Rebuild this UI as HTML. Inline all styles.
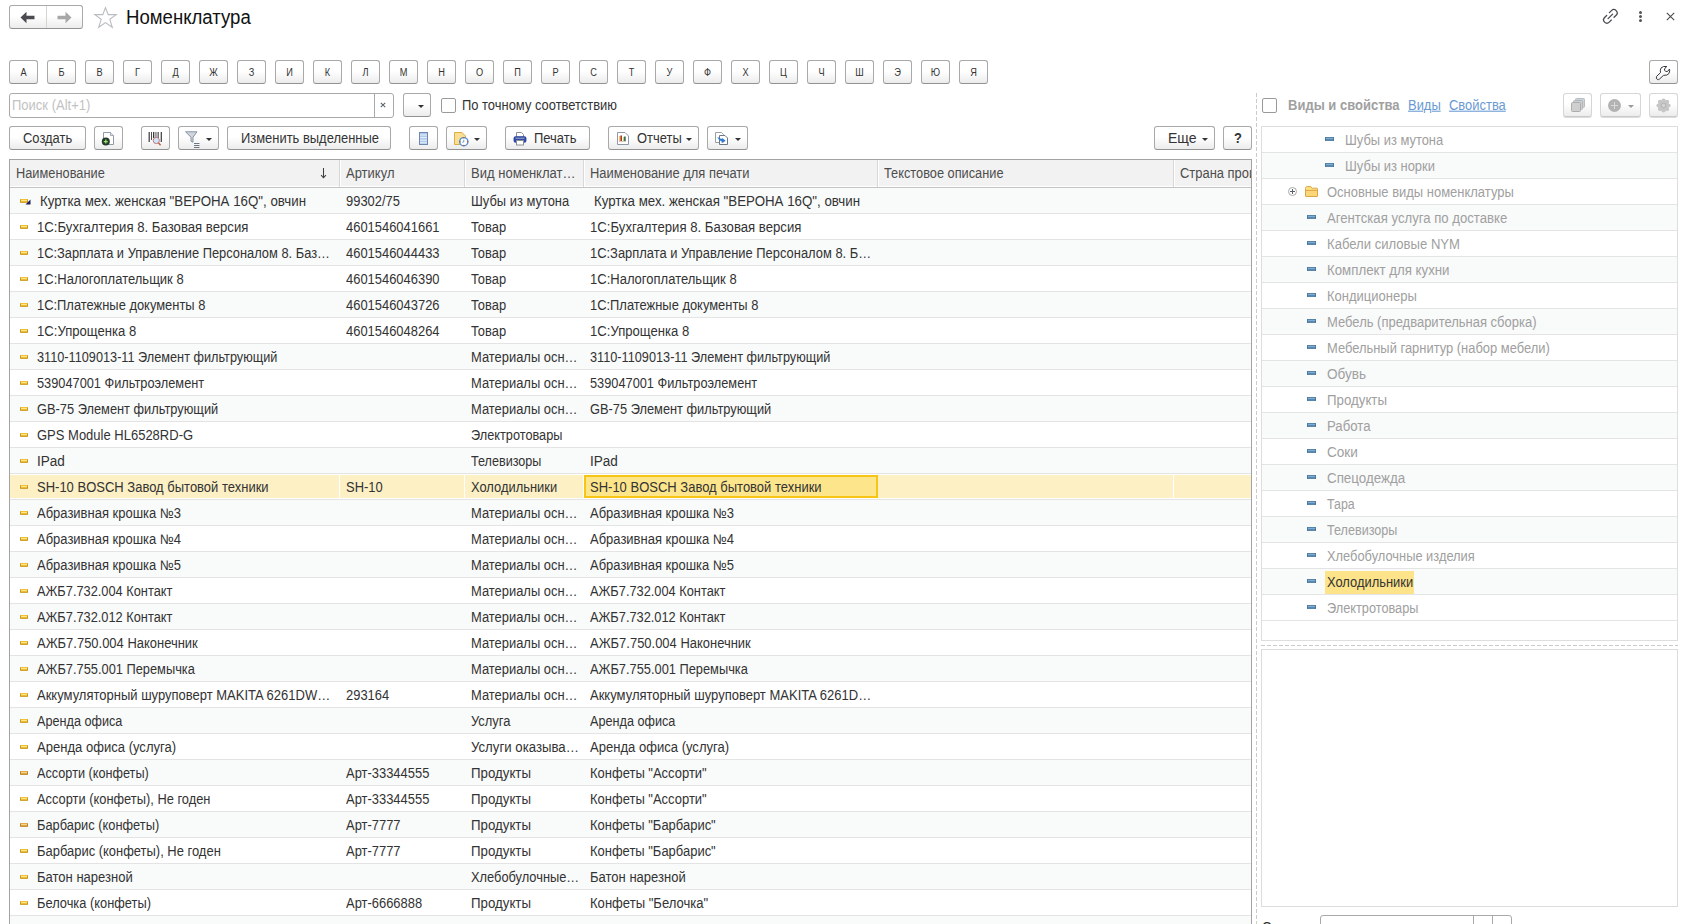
<!DOCTYPE html><html><head><meta charset="utf-8"><title>Номенклатура</title><style>
*{box-sizing:border-box}
html,body{margin:0;padding:0}
body{width:1689px;height:924px;overflow:hidden;background:#fff;position:relative;font-family:"Liberation Sans",sans-serif;font-size:13px;color:#333}
.abs{position:absolute}
.btn{position:absolute;border:1px solid #a9a9a9;border-bottom-color:#929292;border-radius:3px;background:linear-gradient(#ffffff 0%,#ffffff 45%,#ececec 100%);height:24px}
.btn.dis{border-color:#d6d6d6;border-bottom-color:#cacaca;box-shadow:0 1px 0 #dcdcdc}
.lt{position:absolute;top:62px;width:29px;height:23px;font-size:10px;color:#333;text-align:center;line-height:22px;transform:scaleX(0.92)}
.tx{position:absolute;white-space:nowrap;line-height:16px;transform:scale(0.995,1.07);transform-origin:0 3.5px}
.row{position:absolute;left:0;width:1241px;height:26px;border-bottom:1px solid #e4e4e4}
.row.g{background:#f9fafa}
.cell{position:absolute;top:5px;white-space:nowrap;color:#333;line-height:16px;transform:scale(0.995,1.07);transform-origin:0 3.5px}
.ic{position:absolute;left:10px;top:11px;width:8px;height:4px;background:linear-gradient(#f2c232 0 1px,#fde58a 1px 2px,#e9be36 2px 3px,#d3a52e 3px 4px);border-left:1px solid #c8951f;border-right:1px solid #c8951f;border-radius:1px}
.ic.br{background:linear-gradient(#e0a840 0 1px,#f6d596 1px 2px,#dea544 2px 3px,#c99236 3px 4px);border-color:#b98028}
.trow{position:absolute;left:1262px;width:1415px;height:26px;border-bottom:1px solid #e4e4e4}
.trow.g{background:#f9fafa}
.tic{position:absolute;width:9px;height:4px;background:linear-gradient(#5585ab 0 1px,#80acd2 1px 2px,#5a88ad 2px 4px);border-left:1px solid #4d7aa0;border-right:1px solid #4d7aa0}
.ttx{position:absolute;top:5px;white-space:nowrap;color:#a0a0a0;line-height:16px;transform:scale(0.995,1.07);transform-origin:0 3.5px}
.arr{position:absolute;width:0;height:0;border-left:3px solid transparent;border-right:3px solid transparent;border-top:3px solid #333}
</style></head><body>
<div class="btn" style="left:9px;top:5px;width:74px;height:24px"></div>
<div class="abs" style="left:46px;top:6px;width:1px;height:22px;background:#d4d4d4"></div>
<svg class="abs" style="left:20px;top:11px" width="16" height="13" viewBox="0 0 16 13"><path d="M0.5 6.5 L6.5 0.8 L6.5 4.8 L14.5 4.8 L14.5 8.2 L6.5 8.2 L6.5 12.2 Z" fill="#4a4a50"/></svg>
<svg class="abs" style="left:56px;top:11px" width="16" height="13" viewBox="0 0 16 13"><path d="M15.5 6.5 L9.5 0.8 L9.5 4.8 L1.5 4.8 L1.5 8.2 L9.5 8.2 L9.5 12.2 Z" fill="#a7a7a7"/></svg>
<svg class="abs" style="left:93px;top:5px" width="25" height="24" viewBox="0 0 25 24"><path d="M12.5 2.6 L15.2 9.6 L23.2 9.6 L16.8 14.3 L19.3 22.3 L12.5 17.6 L5.7 22.3 L8.2 14.3 L1.8 9.6 L9.8 9.6 Z" fill="none" stroke="#b9bcc0" stroke-width="1.1" stroke-linejoin="miter"/></svg>
<div class="tx" style="left:126px;top:6px;font-size:18.6px;line-height:22px;color:#111;transform:scaleY(1.07);transform-origin:0 4px">Номенклатура</div>
<svg class="abs" style="left:1602px;top:8px" width="17" height="17" viewBox="0 0 19 19"><g fill="none" stroke="#4a4a4f" stroke-width="1.45" stroke-linecap="round"><path d="M8.3 5.2 L10.6 2.9 A3.3 3.3 0 0 1 15.8 8.1 L13.5 10.4"/><path d="M10.4 13.5 L8.1 15.8 A3.3 3.3 0 0 1 2.9 10.6 L5.2 8.3"/><path d="M6.8 11.9 L11.9 6.8"/></g></svg>
<div class="abs" style="left:1639px;top:11px;width:3.4px;height:3.4px;border-radius:50%;background:#555"></div>
<div class="abs" style="left:1639px;top:15px;width:3.4px;height:3.4px;border-radius:50%;background:#555"></div>
<div class="abs" style="left:1639px;top:19px;width:3.4px;height:3.4px;border-radius:50%;background:#555"></div>
<svg class="abs" style="left:1666px;top:12px" width="9" height="9" viewBox="0 0 9 9"><path d="M0.8 0.8 L8.2 8.2 M8.2 0.8 L0.8 8.2" stroke="#4a4a4f" stroke-width="1.1"/></svg>
<div class="btn" style="left:9px;top:60px;width:29px"></div><div class="lt" style="left:9px">А</div>
<div class="btn" style="left:47px;top:60px;width:29px"></div><div class="lt" style="left:47px">Б</div>
<div class="btn" style="left:85px;top:60px;width:29px"></div><div class="lt" style="left:85px">В</div>
<div class="btn" style="left:123px;top:60px;width:29px"></div><div class="lt" style="left:123px">Г</div>
<div class="btn" style="left:161px;top:60px;width:29px"></div><div class="lt" style="left:161px">Д</div>
<div class="btn" style="left:199px;top:60px;width:29px"></div><div class="lt" style="left:199px">Ж</div>
<div class="btn" style="left:237px;top:60px;width:29px"></div><div class="lt" style="left:237px">З</div>
<div class="btn" style="left:275px;top:60px;width:29px"></div><div class="lt" style="left:275px">И</div>
<div class="btn" style="left:313px;top:60px;width:29px"></div><div class="lt" style="left:313px">К</div>
<div class="btn" style="left:351px;top:60px;width:29px"></div><div class="lt" style="left:351px">Л</div>
<div class="btn" style="left:389px;top:60px;width:29px"></div><div class="lt" style="left:389px">М</div>
<div class="btn" style="left:427px;top:60px;width:29px"></div><div class="lt" style="left:427px">Н</div>
<div class="btn" style="left:465px;top:60px;width:29px"></div><div class="lt" style="left:465px">О</div>
<div class="btn" style="left:503px;top:60px;width:29px"></div><div class="lt" style="left:503px">П</div>
<div class="btn" style="left:541px;top:60px;width:29px"></div><div class="lt" style="left:541px">Р</div>
<div class="btn" style="left:579px;top:60px;width:29px"></div><div class="lt" style="left:579px">С</div>
<div class="btn" style="left:617px;top:60px;width:29px"></div><div class="lt" style="left:617px">Т</div>
<div class="btn" style="left:655px;top:60px;width:29px"></div><div class="lt" style="left:655px">У</div>
<div class="btn" style="left:693px;top:60px;width:29px"></div><div class="lt" style="left:693px">Ф</div>
<div class="btn" style="left:731px;top:60px;width:29px"></div><div class="lt" style="left:731px">Х</div>
<div class="btn" style="left:769px;top:60px;width:29px"></div><div class="lt" style="left:769px">Ц</div>
<div class="btn" style="left:807px;top:60px;width:29px"></div><div class="lt" style="left:807px">Ч</div>
<div class="btn" style="left:845px;top:60px;width:29px"></div><div class="lt" style="left:845px">Ш</div>
<div class="btn" style="left:883px;top:60px;width:29px"></div><div class="lt" style="left:883px">Э</div>
<div class="btn" style="left:921px;top:60px;width:29px"></div><div class="lt" style="left:921px">Ю</div>
<div class="btn" style="left:959px;top:60px;width:29px"></div><div class="lt" style="left:959px">Я</div>
<div class="btn" style="left:1649px;top:60px;width:29px"></div>
<svg class="abs" style="left:1649px;top:60px" width="30" height="25" viewBox="0 0 30 25"><path d="M17.8 6.5 L14.6 6.5 Q11.5 7.2 11.3 10.2 L11.5 12.6 L7.6 16.4 Q6.6 18.2 8.4 19.5 Q9.6 20.0 10.4 19.1 L14.6 15.3 L17.8 15.1 Q20.6 14.2 20.7 10.8 L20.5 9.0 L18.6 11.4 Q16.2 12.2 15.4 10.0 Q15.4 8.0 17.8 6.5 Z" fill="none" stroke="#3a3540" stroke-width="1" stroke-linejoin="round"/></svg>
<div class="abs" style="left:9px;top:93px;width:385px;height:25px;border:1px solid #a9a9a9;border-radius:3px;background:#fff"></div>
<div class="abs" style="left:374px;top:94px;width:1px;height:23px;background:#a9a9a9"></div>
<div class="tx" style="left:12px;top:97px;color:#c2c2c2;transform:scaleY(1.07)">Поиск (Alt+1)</div>
<svg class="abs" style="left:380px;top:102px" width="6" height="6" viewBox="0 0 6 6"><path d="M0.8 0.8 L5.2 5.2 M5.2 0.8 L0.8 5.2" stroke="#59626a" stroke-width="1.05"/></svg>
<div class="btn" style="left:403px;top:93px;width:28px;height:24px"></div>
<div class="arr" style="left:418px;top:105px;border-top-color:#333"></div>
<div class="abs" style="left:441px;top:98px;width:15px;height:15px;border:1px solid #9a9a9a;border-radius:2px;background:#fff"></div>
<div class="tx" style="left:462px;top:97px">По точному соответствию</div>
<div class="abs" style="left:1256px;top:93px;width:1px;height:831px;background:repeating-linear-gradient(to bottom,#cbcbcb 0 4px,transparent 4px 6px)"></div>
<div class="abs" style="left:1262px;top:98px;width:15px;height:15px;border:1px solid #9a9a9a;border-radius:2px;background:#fff"></div>
<div class="tx" style="left:1288px;top:97px;font-weight:bold;color:#a0a0a0;transform:scale(1,1.07)">Виды и свойства</div>
<div class="tx" style="left:1408px;top:97px;color:#6a9ad4;text-decoration:underline">Виды</div>
<div class="tx" style="left:1449px;top:97px;color:#6a9ad4;text-decoration:underline">Свойства</div>
<div class="btn dis" style="left:1563px;top:93px;width:29px;height:24px"></div>
<svg class="abs" style="left:1571px;top:98px" width="16" height="15" viewBox="0 0 16 15"><rect x="4.5" y="0.5" width="9" height="9" rx="1" fill="#c9d3dd" stroke="#b8bcc0"/><rect x="2.5" y="2.5" width="9" height="9" rx="1" fill="#cfcfcf" stroke="#b5b5b5"/><rect x="0.5" y="4.5" width="9" height="9" rx="1" fill="#cfcfcf" stroke="#adadad"/></svg>
<div class="btn dis" style="left:1600px;top:93px;width:41px;height:24px"></div>
<div class="abs" style="left:1608px;top:99px;width:13px;height:13px;border-radius:50%;background:#b3b3b3"></div>
<div class="abs" style="left:1614px;top:102px;width:1px;height:7px;background:#d5dcd5"></div><div class="abs" style="left:1611px;top:105px;width:7px;height:1px;background:#d5dcd5"></div>
<div class="arr" style="left:1628px;top:105px;border-top-color:#9a9a9a"></div>
<div class="btn dis" style="left:1649px;top:93px;width:29px;height:24px"></div>
<svg class="abs" style="left:1656px;top:98px" width="15" height="15" viewBox="0 0 15 15"><g fill="#c6c6c6"><circle cx="7.5" cy="7.5" r="5.2"/><circle cx="12.50" cy="7.50" r="2.1"/><circle cx="11.04" cy="11.04" r="2.1"/><circle cx="7.50" cy="12.50" r="2.1"/><circle cx="3.96" cy="11.04" r="2.1"/><circle cx="2.50" cy="7.50" r="2.1"/><circle cx="3.96" cy="3.96" r="2.1"/><circle cx="7.50" cy="2.50" r="2.1"/><circle cx="11.04" cy="3.96" r="2.1"/></g><circle cx="7.5" cy="7.5" r="2.3" fill="#d2d2d2" stroke="#b4b4b4" stroke-width="1"/></svg>
<div class="btn " style="left:9px;top:126px;width:77px;height:24px"></div>
<div class="tx" style="left:23px;top:130px">Создать</div>
<div class="btn " style="left:94px;top:126px;width:29px;height:24px"></div>
<svg class="abs" style="left:100px;top:129px" width="17" height="18" viewBox="0 0 17 18"><path d="M3.5 3.5 L10.5 3.5 L13.5 6.5 L13.5 15.5 L3.5 15.5 Z" fill="#fff" stroke="#8e9bab"/><path d="M10.5 3.5 L10.5 6.5 L13.5 6.5" fill="#dfe6ef" stroke="#8e9bab" stroke-width="0.8"/><circle cx="5.8" cy="12.6" r="4" fill="#243b2c"/><path d="M3.8 12.6 H7.8 M5.8 10.6 V14.6" stroke="#9be36f" stroke-width="1.3"/></svg>
<div class="btn " style="left:141px;top:126px;width:29px;height:24px"></div>
<svg class="abs" style="left:147px;top:129px" width="17" height="19" viewBox="0 0 17 19"><g fill="#3a3a3a"><rect x="1.6" y="3" width="1.2" height="10"/><rect x="4" y="3" width="0.9" height="8"/><rect x="6" y="3" width="1.3" height="6"/><rect x="8.5" y="3" width="0.9" height="6"/><rect x="10.6" y="3" width="1.1" height="6"/><rect x="13.7" y="3" width="1.2" height="10"/></g><circle cx="9.3" cy="11.5" r="3.1" fill="#cfe6fa" stroke="#c07a7a" stroke-width="1"/><path d="M11.4 13.7 L13.6 16.2" stroke="#c8604a" stroke-width="1.5"/></svg>
<div class="btn " style="left:178px;top:126px;width:41px;height:24px"></div>
<svg class="abs" style="left:184px;top:129px" width="19" height="19" viewBox="0 0 19 19"><path d="M1.5 2.8 L13 2.8 L9 8.2 L9 13.2 L7 12.2 L7 8.2 Z" fill="#d2d6dc" stroke="#8894a4" stroke-width="1"/><path d="M10 14.5 H15.5 M10 16.5 H15.5 M10 18.5 H15.5" stroke="#6d7886" stroke-width="1"/></svg>
<div class="arr" style="left:206px;top:138px;border-top-color:#333"></div>
<div class="btn " style="left:227px;top:126px;width:164px;height:24px"></div>
<div class="tx" style="left:241px;top:130px">Изменить выделенные</div>
<div class="btn " style="left:409px;top:126px;width:29px;height:24px"></div>
<svg class="abs" style="left:418px;top:131px" width="11" height="15" viewBox="0 0 11 15"><rect x="1.5" y="1.5" width="8" height="12" fill="#aecaE8" stroke="#6f86ad"/><path d="M2 4 H9 M2 6.6 H9 M2 9.2 H9 M2 11.8 H9" stroke="#f0f6ff" stroke-width="0.9"/></svg>
<div class="btn " style="left:446px;top:126px;width:41px;height:24px"></div>
<svg class="abs" style="left:452px;top:130px" width="18" height="17" viewBox="0 0 18 17"><path d="M2.5 2.5 L10 2.5 L13.5 6 L13.5 14.5 L2.5 14.5 Z" fill="#f8df93" stroke="#dcae48"/><circle cx="11.8" cy="11.7" r="4.1" fill="#fff" stroke="#4b8fd6" stroke-width="1.4"/><circle cx="11.8" cy="7.8" r="0.7" fill="#d05030"/><circle cx="8" cy="11.7" r="0.7" fill="#d05030"/><circle cx="15.6" cy="11.7" r="0.7" fill="#d05030"/><circle cx="11.8" cy="15.5" r="0.7" fill="#d05030"/><path d="M11.8 9.8 V11.9 L10.4 12.4" stroke="#4b8fd6" stroke-width="0.9" fill="none"/></svg>
<div class="arr" style="left:474px;top:138px;border-top-color:#333"></div>
<div class="btn " style="left:505px;top:126px;width:85px;height:24px"></div>
<svg class="abs" style="left:511px;top:129px" width="18" height="18" viewBox="0 0 18 18"><path d="M5.5 3.5 L10.5 3.5 L12.5 5.5 L12.5 8 L5.5 8 Z" fill="#fff" stroke="#8a8f96"/><rect x="2.6" y="7.2" width="12.8" height="6.6" rx="2" fill="#2f47a6"/><rect x="4.5" y="8.5" width="9" height="1.6" fill="#7d8fb8"/><rect x="5.5" y="11.5" width="7" height="4.5" fill="#fff" stroke="#8a8f96"/></svg>
<div class="tx" style="left:534px;top:130px">Печать</div>
<div class="btn " style="left:608px;top:126px;width:91px;height:24px"></div>
<svg class="abs" style="left:616px;top:130px" width="14" height="17" viewBox="0 0 14 17"><path d="M1.5 2.5 L9 2.5 L12.5 6 L12.5 14.5 L1.5 14.5 Z" fill="#fff" stroke="#8f98a8"/><rect x="3.2" y="6" width="1.2" height="5" fill="#f4b040"/><rect x="4.4" y="5.5" width="1.6" height="5.5" fill="#b83024"/><rect x="7" y="7" width="1.4" height="4" fill="#9be070"/><rect x="8.2" y="6.5" width="1.4" height="4.5" fill="#1f4a30"/><rect x="3" y="11" width="7" height="0.6" fill="#c8a0a0"/></svg>
<div class="tx" style="left:637px;top:130px">Отчеты</div>
<div class="arr" style="left:686px;top:138px;border-top-color:#333"></div>
<div class="btn " style="left:707px;top:126px;width:41px;height:24px"></div>
<svg class="abs" style="left:713px;top:130px" width="17" height="17" viewBox="0 0 17 17"><path d="M2.5 2.5 L8.5 2.5 L10.5 4.5 L10.5 12.5 L2.5 12.5 Z" fill="#fff" stroke="#9a9ea4"/><path d="M6.5 5.5 L12 5.5 L14.5 8 L14.5 14.5 L6.5 14.5 Z" fill="#fff" stroke="#6d7884"/><path d="M4.2 7.3 Q7 7.3 8 9 L9.6 8.2 L12.6 10.8 L8.6 13 L8.8 11.6 Q6.4 11.2 4.2 7.3 Z" fill="#2f7bd0"/><path d="M8.6 13 L12.6 10.8 L10 12.6 Z" fill="#1a2a50"/></svg>
<div class="arr" style="left:735px;top:138px;border-top-color:#333"></div>
<div class="btn " style="left:1154px;top:126px;width:61px;height:24px"></div>
<div class="tx" style="left:1168px;top:130px;transform:scale(1.08,1.07)">Еще</div>
<div class="arr" style="left:1202px;top:138px;border-top-color:#333"></div>
<div class="btn " style="left:1223px;top:126px;width:29px;height:24px"></div>
<div class="tx" style="left:1234px;top:130px;font-weight:bold;color:#333">?</div>
<div class="abs" style="left:9px;top:159px;width:1243px;height:780px;border:1px solid #a3a3a3;border-bottom:none;background:#fff"></div>
<div class="abs" style="left:10px;top:160px;width:1241px;height:764px;overflow:hidden">
<div class="abs" style="left:0;top:0;width:1241px;height:28px;background:linear-gradient(#f2f2f2 0 26px,#fff 26px 27px);border-bottom:1px solid #c4c4c4"></div>
<div class="abs" style="left:329px;top:0;width:1px;height:27px;background:#d8d8d8"></div><div class="abs" style="left:330px;top:0;width:1px;height:27px;background:#fff"></div>
<div class="abs" style="left:454px;top:0;width:1px;height:27px;background:#d8d8d8"></div><div class="abs" style="left:455px;top:0;width:1px;height:27px;background:#fff"></div>
<div class="abs" style="left:573px;top:0;width:1px;height:27px;background:#d8d8d8"></div><div class="abs" style="left:574px;top:0;width:1px;height:27px;background:#fff"></div>
<div class="abs" style="left:867px;top:0;width:1px;height:27px;background:#d8d8d8"></div><div class="abs" style="left:868px;top:0;width:1px;height:27px;background:#fff"></div>
<div class="abs" style="left:1163px;top:0;width:1px;height:27px;background:#d8d8d8"></div><div class="abs" style="left:1164px;top:0;width:1px;height:27px;background:#fff"></div>
<div class="tx" style="left:6px;top:5px;color:#4d4d4d;transform:scale(0.985,1.07)">Наименование</div>
<div class="tx" style="left:336px;top:5px;color:#4d4d4d;transform:scale(1.000,1.07)">Артикул</div>
<div class="tx" style="left:461px;top:5px;color:#4d4d4d;transform:scale(1.003,1.07)">Вид номенклат…</div>
<div class="tx" style="left:580px;top:5px;color:#4d4d4d;transform:scale(0.995,1.07)">Наименование для печати</div>
<div class="tx" style="left:874px;top:5px;color:#4d4d4d;transform:scale(0.983,1.07)">Текстовое описание</div>
<div class="tx" style="left:1170px;top:5px;color:#4d4d4d;transform:scale(0.995,1.07)">Страна производства</div>
<svg class="abs" style="left:309px;top:6px" width="9" height="13" viewBox="0 0 9 13"><path d="M4.5 2 V11.6 M2.1 9.2 L4.5 11.8 L6.9 9.2" fill="none" stroke="#404040" stroke-width="1.05"/></svg>
<div class="row g" style="top:28px;left:0">
<div class="ic"></div>
<svg class="abs" style="left:15px;top:11px" width="6" height="6" viewBox="0 0 6 6"><path d="M5.5 0.5 L5.5 5.5 L0.5 5.5 Z" fill="#1e1e5a"/></svg>
<div class="cell" style="left:30px;transform:scale(1.023,1.07)">Куртка мех. женская &quot;ВЕРОНА 16Q&quot;, овчин</div>
<div class="cell" style="left:336px;transform:scale(0.995,1.07)">99302/75</div>
<div class="cell" style="left:461px;transform:scale(0.993,1.07)">Шубы из мутона</div>
<div class="cell" style="left:584px;transform:scale(1.023,1.07)">Куртка мех. женская &quot;ВЕРОНА 16Q&quot;, овчин</div>
</div>
<div class="row" style="top:54px;left:0">
<div class="ic"></div>
<div class="cell" style="left:27px;transform:scale(1.013,1.07)">1С:Бухгалтерия 8. Базовая версия</div>
<div class="cell" style="left:336px;transform:scale(0.995,1.07)">4601546041661</div>
<div class="cell" style="left:461px;transform:scale(0.991,1.07)">Товар</div>
<div class="cell" style="left:580px;transform:scale(1.013,1.07)">1С:Бухгалтерия 8. Базовая версия</div>
</div>
<div class="row g" style="top:80px;left:0">
<div class="ic"></div>
<div class="cell" style="left:27px;transform:scale(0.989,1.07)">1С:Зарплата и Управление Персоналом 8. Баз…</div>
<div class="cell" style="left:336px;transform:scale(0.995,1.07)">4601546044433</div>
<div class="cell" style="left:461px;transform:scale(0.991,1.07)">Товар</div>
<div class="cell" style="left:580px;transform:scale(0.993,1.07)">1С:Зарплата и Управление Персоналом 8. Б…</div>
</div>
<div class="row" style="top:106px;left:0">
<div class="ic"></div>
<div class="cell" style="left:27px;transform:scale(1.001,1.07)">1С:Налогоплательщик 8</div>
<div class="cell" style="left:336px;transform:scale(0.995,1.07)">4601546046390</div>
<div class="cell" style="left:461px;transform:scale(0.991,1.07)">Товар</div>
<div class="cell" style="left:580px;transform:scale(1.001,1.07)">1С:Налогоплательщик 8</div>
</div>
<div class="row g" style="top:132px;left:0">
<div class="ic"></div>
<div class="cell" style="left:27px;transform:scale(0.993,1.07)">1С:Платежные документы 8</div>
<div class="cell" style="left:336px;transform:scale(0.995,1.07)">4601546043726</div>
<div class="cell" style="left:461px;transform:scale(0.991,1.07)">Товар</div>
<div class="cell" style="left:580px;transform:scale(0.993,1.07)">1С:Платежные документы 8</div>
</div>
<div class="row" style="top:158px;left:0">
<div class="ic"></div>
<div class="cell" style="left:27px;transform:scale(1.009,1.07)">1С:Упрощенка 8</div>
<div class="cell" style="left:336px;transform:scale(0.995,1.07)">4601546048264</div>
<div class="cell" style="left:461px;transform:scale(0.991,1.07)">Товар</div>
<div class="cell" style="left:580px;transform:scale(1.009,1.07)">1С:Упрощенка 8</div>
</div>
<div class="row g" style="top:184px;left:0">
<div class="ic"></div>
<div class="cell" style="left:27px;transform:scale(0.978,1.07)">3110-1109013-11 Элемент фильтрующий</div>
<div class="cell" style="left:461px;transform:scale(0.994,1.07)">Материалы осн…</div>
<div class="cell" style="left:580px;transform:scale(0.978,1.07)">3110-1109013-11 Элемент фильтрующий</div>
</div>
<div class="row" style="top:210px;left:0">
<div class="ic"></div>
<div class="cell" style="left:27px;transform:scale(0.983,1.07)">539047001 Фильтроэлемент</div>
<div class="cell" style="left:461px;transform:scale(0.994,1.07)">Материалы осн…</div>
<div class="cell" style="left:580px;transform:scale(0.983,1.07)">539047001 Фильтроэлемент</div>
</div>
<div class="row g" style="top:236px;left:0">
<div class="ic"></div>
<div class="cell" style="left:27px;transform:scale(0.987,1.07)">GB-75 Элемент фильтрующий</div>
<div class="cell" style="left:461px;transform:scale(0.994,1.07)">Материалы осн…</div>
<div class="cell" style="left:580px;transform:scale(0.987,1.07)">GB-75 Элемент фильтрующий</div>
</div>
<div class="row" style="top:262px;left:0">
<div class="ic"></div>
<div class="cell" style="left:27px;transform:scale(1.000,1.07)">GPS Module HL6528RD-G</div>
<div class="cell" style="left:461px;transform:scale(0.980,1.07)">Электротовары</div>
</div>
<div class="row g" style="top:288px;left:0">
<div class="ic"></div>
<div class="cell" style="left:27px;transform:scale(1.042,1.07)">IPad</div>
<div class="cell" style="left:461px;transform:scale(0.970,1.07)">Телевизоры</div>
<div class="cell" style="left:580px;transform:scale(1.042,1.07)">IPad</div>
</div>
<div class="row" style="top:314px;left:0">
<div class="abs" style="left:0;top:1px;width:1241px;height:23px;background:#fcf0c4"></div>
<div class="abs" style="left:329px;top:0;width:1px;height:25px;background:#fff"></div>
<div class="abs" style="left:454px;top:0;width:1px;height:25px;background:#fff"></div>
<div class="abs" style="left:573px;top:0;width:1px;height:25px;background:#fff"></div>
<div class="abs" style="left:867px;top:0;width:1px;height:25px;background:#fff"></div>
<div class="abs" style="left:1163px;top:0;width:1px;height:25px;background:#fff"></div>
<div class="abs" style="left:574px;top:1px;width:294px;height:23px;border:2px solid #f7c516;background:#fde58c"></div>
<div class="ic"></div>
<div class="cell" style="left:27px;transform:scale(1.000,1.07)">SH-10 BOSCH Завод бытовой техники</div>
<div class="cell" style="left:336px;transform:scale(0.995,1.07)">SH-10</div>
<div class="cell" style="left:461px;transform:scale(0.993,1.07)">Холодильники</div>
<div class="cell" style="left:580px;transform:scale(1.000,1.07)">SH-10 BOSCH Завод бытовой техники</div>
</div>
<div class="row g" style="top:340px;left:0">
<div class="ic"></div>
<div class="cell" style="left:27px;transform:scale(0.999,1.07)">Абразивная крошка №3</div>
<div class="cell" style="left:461px;transform:scale(0.994,1.07)">Материалы осн…</div>
<div class="cell" style="left:580px;transform:scale(0.999,1.07)">Абразивная крошка №3</div>
</div>
<div class="row" style="top:366px;left:0">
<div class="ic"></div>
<div class="cell" style="left:27px;transform:scale(0.999,1.07)">Абразивная крошка №4</div>
<div class="cell" style="left:461px;transform:scale(0.994,1.07)">Материалы осн…</div>
<div class="cell" style="left:580px;transform:scale(0.999,1.07)">Абразивная крошка №4</div>
</div>
<div class="row g" style="top:392px;left:0">
<div class="ic"></div>
<div class="cell" style="left:27px;transform:scale(0.999,1.07)">Абразивная крошка №5</div>
<div class="cell" style="left:461px;transform:scale(0.994,1.07)">Материалы осн…</div>
<div class="cell" style="left:580px;transform:scale(0.999,1.07)">Абразивная крошка №5</div>
</div>
<div class="row" style="top:418px;left:0">
<div class="ic"></div>
<div class="cell" style="left:27px;transform:scale(0.985,1.07)">АЖБ7.732.004 Контакт</div>
<div class="cell" style="left:461px;transform:scale(0.994,1.07)">Материалы осн…</div>
<div class="cell" style="left:580px;transform:scale(0.985,1.07)">АЖБ7.732.004 Контакт</div>
</div>
<div class="row g" style="top:444px;left:0">
<div class="ic"></div>
<div class="cell" style="left:27px;transform:scale(0.985,1.07)">АЖБ7.732.012 Контакт</div>
<div class="cell" style="left:461px;transform:scale(0.994,1.07)">Материалы осн…</div>
<div class="cell" style="left:580px;transform:scale(0.985,1.07)">АЖБ7.732.012 Контакт</div>
</div>
<div class="row" style="top:470px;left:0">
<div class="ic"></div>
<div class="cell" style="left:27px;transform:scale(0.997,1.07)">АЖБ7.750.004 Наконечник</div>
<div class="cell" style="left:461px;transform:scale(0.994,1.07)">Материалы осн…</div>
<div class="cell" style="left:580px;transform:scale(0.997,1.07)">АЖБ7.750.004 Наконечник</div>
</div>
<div class="row g" style="top:496px;left:0">
<div class="ic"></div>
<div class="cell" style="left:27px;transform:scale(0.987,1.07)">АЖБ7.755.001 Перемычка</div>
<div class="cell" style="left:461px;transform:scale(0.994,1.07)">Материалы осн…</div>
<div class="cell" style="left:580px;transform:scale(0.987,1.07)">АЖБ7.755.001 Перемычка</div>
</div>
<div class="row" style="top:522px;left:0">
<div class="ic"></div>
<div class="cell" style="left:27px;transform:scale(1.000,1.07)">Аккумуляторный шуруповерт MAKITA 6261DW…</div>
<div class="cell" style="left:336px;transform:scale(0.995,1.07)">293164</div>
<div class="cell" style="left:461px;transform:scale(0.994,1.07)">Материалы осн…</div>
<div class="cell" style="left:580px;transform:scale(1.001,1.07)">Аккумуляторный шуруповерт MAKITA 6261D…</div>
</div>
<div class="row g" style="top:548px;left:0">
<div class="ic"></div>
<div class="cell" style="left:27px;transform:scale(0.974,1.07)">Аренда офиса</div>
<div class="cell" style="left:461px;transform:scale(0.995,1.07)">Услуга</div>
<div class="cell" style="left:580px;transform:scale(0.974,1.07)">Аренда офиса</div>
</div>
<div class="row" style="top:574px;left:0">
<div class="ic"></div>
<div class="cell" style="left:27px;transform:scale(1.004,1.07)">Аренда офиса (услуга)</div>
<div class="cell" style="left:461px;transform:scale(1.016,1.07)">Услуги оказыва…</div>
<div class="cell" style="left:580px;transform:scale(1.004,1.07)">Аренда офиса (услуга)</div>
</div>
<div class="row g" style="top:600px;left:0">
<div class="ic br"></div>
<div class="cell" style="left:27px;transform:scale(0.976,1.07)">Ассорти (конфеты)</div>
<div class="cell" style="left:336px;transform:scale(0.995,1.07)">Арт-33344555</div>
<div class="cell" style="left:461px;transform:scale(1.021,1.07)">Продукты</div>
<div class="cell" style="left:580px;transform:scale(0.999,1.07)">Конфеты &quot;Ассорти&quot;</div>
</div>
<div class="row" style="top:626px;left:0">
<div class="ic"></div>
<div class="cell" style="left:27px;transform:scale(0.989,1.07)">Ассорти (конфеты), Не годен</div>
<div class="cell" style="left:336px;transform:scale(0.995,1.07)">Арт-33344555</div>
<div class="cell" style="left:461px;transform:scale(1.021,1.07)">Продукты</div>
<div class="cell" style="left:580px;transform:scale(0.999,1.07)">Конфеты &quot;Ассорти&quot;</div>
</div>
<div class="row g" style="top:652px;left:0">
<div class="ic br"></div>
<div class="cell" style="left:27px;transform:scale(0.988,1.07)">Барбарис (конфеты)</div>
<div class="cell" style="left:336px;transform:scale(0.995,1.07)">Арт-7777</div>
<div class="cell" style="left:461px;transform:scale(1.021,1.07)">Продукты</div>
<div class="cell" style="left:580px;transform:scale(0.998,1.07)">Конфеты &quot;Барбарис&quot;</div>
</div>
<div class="row" style="top:678px;left:0">
<div class="ic"></div>
<div class="cell" style="left:27px;transform:scale(0.996,1.07)">Барбарис (конфеты), Не годен</div>
<div class="cell" style="left:336px;transform:scale(0.995,1.07)">Арт-7777</div>
<div class="cell" style="left:461px;transform:scale(1.021,1.07)">Продукты</div>
<div class="cell" style="left:580px;transform:scale(0.998,1.07)">Конфеты &quot;Барбарис&quot;</div>
</div>
<div class="row g" style="top:704px;left:0">
<div class="ic"></div>
<div class="cell" style="left:27px;transform:scale(1.002,1.07)">Батон нарезной</div>
<div class="cell" style="left:461px;transform:scale(0.987,1.07)">Хлебобулочные…</div>
<div class="cell" style="left:580px;transform:scale(1.002,1.07)">Батон нарезной</div>
</div>
<div class="row" style="top:730px;left:0">
<div class="ic"></div>
<div class="cell" style="left:27px;transform:scale(0.988,1.07)">Белочка (конфеты)</div>
<div class="cell" style="left:336px;transform:scale(0.995,1.07)">Арт-6666888</div>
<div class="cell" style="left:461px;transform:scale(1.021,1.07)">Продукты</div>
<div class="cell" style="left:580px;transform:scale(1.005,1.07)">Конфеты &quot;Белочка&quot;</div>
</div>
<div class="row g" style="top:756px;left:0">
</div>
</div>
<div class="abs" style="left:1261px;top:126px;width:417px;height:515px;border:1px solid #dedede;background:#fff"></div>
<div class="trow" style="top:127px;width:415px">
<div class="tic" style="left:63px;top:10px"></div>
<div class="ttx" style="left:83px;transform:scale(0.993,1.07)">Шубы из мутона</div>
</div>
<div class="trow g" style="top:153px;width:415px">
<div class="tic" style="left:63px;top:10px"></div>
<div class="ttx" style="left:83px;transform:scale(0.995,1.07)">Шубы из норки</div>
</div>
<div class="trow" style="top:179px;width:415px">
<svg class="abs" style="left:26px;top:8px" width="10" height="10" viewBox="0 0 10 10"><circle cx="4.5" cy="4.5" r="4" fill="#fff" stroke="#a9a9a9" stroke-width="1"/><path d="M2 4.5 H7 M4.5 2 V7" stroke="#56616b" stroke-width="1"/></svg>
<svg class="abs" style="left:43px;top:7px" width="14" height="12" viewBox="0 0 14 12"><path d="M0.5 10 L0.5 2.5 Q0.5 0.5 2.5 0.5 L5.5 0.5 L7.3 2.2 L11.8 2.2 Q12.5 2.2 12.5 3 L12.5 10 Q12.5 10.5 12 10.5 L1 10.5 Q0.5 10.5 0.5 10 Z" fill="#fcd77a" stroke="#dba54a" stroke-width="1"/><path d="M1 1.5 H5 L6.5 3 H1 Z" fill="#fde47a"/><path d="M0.8 4.5 H12.2" stroke="#e0aa55" stroke-width="1"/></svg>
<div class="ttx" style="left:65px;transform:scale(0.998,1.07)">Основные виды номенклатуры</div>
</div>
<div class="trow g" style="top:205px;width:415px">
<div class="tic" style="left:45px;top:10px"></div>
<div class="ttx" style="left:65px;transform:scale(1.012,1.07)">Агентская услуга по доставке</div>
</div>
<div class="trow" style="top:231px;width:415px">
<div class="tic" style="left:45px;top:10px"></div>
<div class="ttx" style="left:65px;transform:scale(1.007,1.07)">Кабели силовые NYM</div>
</div>
<div class="trow g" style="top:257px;width:415px">
<div class="tic" style="left:45px;top:10px"></div>
<div class="ttx" style="left:65px;transform:scale(1.020,1.07)">Комплект для кухни</div>
</div>
<div class="trow" style="top:283px;width:415px">
<div class="tic" style="left:45px;top:10px"></div>
<div class="ttx" style="left:65px;transform:scale(1.001,1.07)">Кондиционеры</div>
</div>
<div class="trow g" style="top:309px;width:415px">
<div class="tic" style="left:45px;top:10px"></div>
<div class="ttx" style="left:65px;transform:scale(0.999,1.07)">Мебель (предварительная сборка)</div>
</div>
<div class="trow" style="top:335px;width:415px">
<div class="tic" style="left:45px;top:10px"></div>
<div class="ttx" style="left:65px;transform:scale(0.994,1.07)">Мебельный гарнитур (набор мебели)</div>
</div>
<div class="trow g" style="top:361px;width:415px">
<div class="tic" style="left:45px;top:10px"></div>
<div class="ttx" style="left:65px;transform:scale(1.045,1.07)">Обувь</div>
</div>
<div class="trow" style="top:387px;width:415px">
<div class="tic" style="left:45px;top:10px"></div>
<div class="ttx" style="left:65px;transform:scale(1.021,1.07)">Продукты</div>
</div>
<div class="trow g" style="top:413px;width:415px">
<div class="tic" style="left:45px;top:10px"></div>
<div class="ttx" style="left:65px;transform:scale(1.015,1.07)">Работа</div>
</div>
<div class="trow" style="top:439px;width:415px">
<div class="tic" style="left:45px;top:10px"></div>
<div class="ttx" style="left:65px;transform:scale(1.045,1.07)">Соки</div>
</div>
<div class="trow g" style="top:465px;width:415px">
<div class="tic" style="left:45px;top:10px"></div>
<div class="ttx" style="left:65px;transform:scale(1.027,1.07)">Спецодежда</div>
</div>
<div class="trow" style="top:491px;width:415px">
<div class="tic" style="left:45px;top:10px"></div>
<div class="ttx" style="left:65px;transform:scale(0.955,1.07)">Тара</div>
</div>
<div class="trow g" style="top:517px;width:415px">
<div class="tic" style="left:45px;top:10px"></div>
<div class="ttx" style="left:65px;transform:scale(0.970,1.07)">Телевизоры</div>
</div>
<div class="trow" style="top:543px;width:415px">
<div class="tic" style="left:45px;top:10px"></div>
<div class="ttx" style="left:65px;transform:scale(0.989,1.07)">Хлебобулочные изделия</div>
</div>
<div class="trow g" style="top:569px;width:415px">
<div class="tic" style="left:45px;top:10px"></div>
<div class="abs" style="left:63px;top:2px;width:89px;height:23px;background:#fde38a"></div>
<div class="ttx" style="left:65px;color:#333;transform:scale(0.993,1.07)">Холодильники</div>
</div>
<div class="trow" style="top:595px;width:415px">
<div class="tic" style="left:45px;top:10px"></div>
<div class="ttx" style="left:65px;transform:scale(0.980,1.07)">Электротовары</div>
</div>
<div class="abs" style="left:1261px;top:645px;width:417px;height:1px;background:repeating-linear-gradient(to right,#cbcbcb 0 4px,transparent 4px 6px)"></div>
<div class="abs" style="left:1261px;top:649px;width:417px;height:258px;border:1px solid #dcdcdc;background:#fff"></div>
<div class="abs" style="left:1320px;top:915px;width:192px;height:20px;border:1px solid #a9a9a9;border-radius:3px;background:#fff"></div>
<div class="abs" style="left:1473px;top:916px;width:1px;height:10px;background:#a9a9a9"></div><div class="abs" style="left:1492px;top:916px;width:1px;height:10px;background:#a9a9a9"></div>
<div class="tx" style="left:1262px;top:919px">Основные</div>
</body></html>
